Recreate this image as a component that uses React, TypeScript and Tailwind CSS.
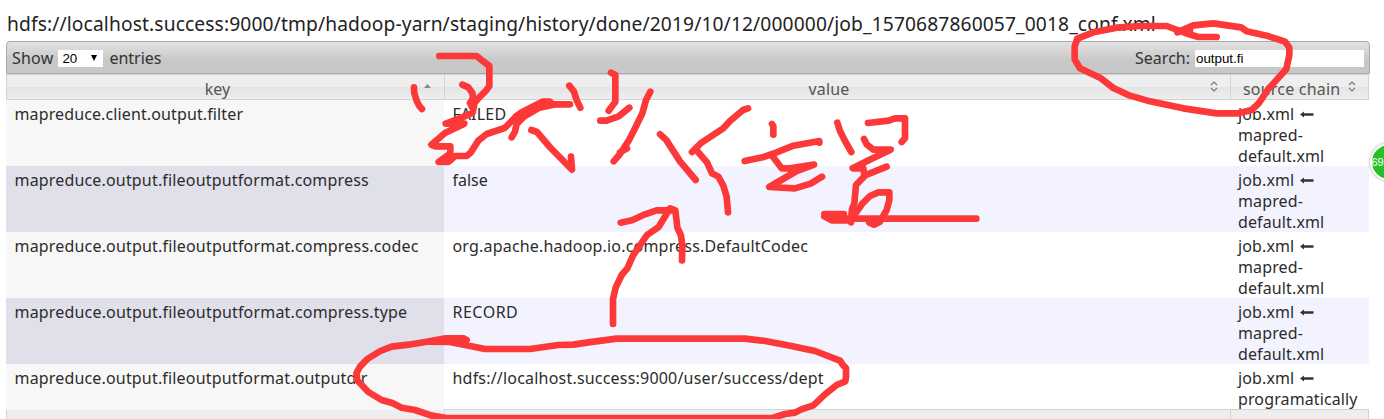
import React from "react";

type Row = { name: string; value: string; chain: string[]; nameGap: string; valueGap: string };

const rows: Row[] = [
  { name: "mapreduce.client.output.filter", value: "FAILED", chain: ["mapred-", "default.xml"], nameGap: "tracking-[0.12px]", valueGap: "tracking-[0.2px]" },
  { name: "mapreduce.output.fileoutputformat.compress", value: "false", chain: ["mapred-", "default.xml"], nameGap: "tracking-[0.17px]", valueGap: "tracking-normal" },
  { name: "mapreduce.output.fileoutputformat.compress.codec", value: "org.apache.hadoop.io.compress.DefaultCodec", chain: ["mapred-", "default.xml"], nameGap: "tracking-[0.18px]", valueGap: "tracking-[0.19px]" },
  { name: "mapreduce.output.fileoutputformat.compress.type", value: "RECORD", chain: ["mapred-", "default.xml"], nameGap: "tracking-[0.18px]", valueGap: "tracking-[0.5px]" },
  { name: "mapreduce.output.fileoutputformat.outputdir", value: "hdfs://localhost.success:9000/user/success/dept", chain: ["programatically"], nameGap: "tracking-[0.17px]", valueGap: "tracking-[0.2px]" },
];

const bodyGrid = "grid grid-cols-[438px_786px_139px]";
const headGrid = "grid grid-cols-[437px_786px_138px]";

function SortBoth() {
  return (
    <svg width="8" height="11" viewBox="0 0 8 11" fill="none" stroke="#777" strokeWidth="1.1" className="-mt-[3px] shrink-0">
      <path d="M1 4 4 1l3 3M1 7l3 3 3-3" />
    </svg>
  );
}

function Arrow() {
  return (
    <svg width="14" height="7" viewBox="0 0 14 7" className="ml-[6px] inline-block align-[2px]">
      <path d="M0 3.5 4 .6V2.2h9.500v2.600H4v1.600z" fill="#333" />
    </svg>
  );
}

function Marks() {
  return (
    <svg className="pointer-events-none absolute left-0 top-0" width="1384" height="419" viewBox="0 0 1384 419" fill="none" stroke="#fc3838" strokeWidth="20" strokeLinecap="round" strokeLinejoin="round">
      <g transform="translate(400 50) scale(.33333)">
        <path d="M42 112 43 130 50 152 58 168 66 177" />
        <path d="M118 18H230L246 31 268 48V108L258 122 235 145 215 170" />
        <path d="M187 104 205 112 217 129 219 145 210 159 222 168 218 188 180 205 137 221H193L135 249 94 284 105 289H151V310L116 336 145 336 166 318H200L212 308 235 272 260 252 314 234 345 203 363 188 405 166 427 155H449L459 163 510 163" />
        <path d="M335 262 345 245 350 222 372 200 418 173 460 164" />
        <path d="M350 200 410 172" strokeWidth="24" />
        <path d="M394 240 411 246 452 294 516 359 513 320" />
        <path d="M508 107 522 125 530 151 541 173" />
        <path d="M633 68 646 74V155L626 182" />
        <path d="M601 212H620L656 199 688 173" />
        <path d="M751 125 738 150 727 190 704 237 686 272 660 312 641 334M681 295 660 307" />
      </g>
      <g transform="translate(640 90) scale(.33333)">
        <path d="M60 133 78 149 120 214 167 270" />
        <path d="M324 55 309 60 270 93 250 115 182 160 156 186M169 180 201 217 216 250 235 260 250 287 260 320 264 367" />
        <path d="M396 102 400 108V134" />
        <path d="M314 213 368 202 410 187 460 167 538 153V158M397 198 425 235H450L522 224 470 243 388 291 465 295 512 281 546 260" />
        <path d="M592 98 600 123 615 153 634 186" />
        <path d="M684 99 746 92 765 85H795V145L785 156" />
        <path d="M672 147 680 163 700 179H752L695 206 638 235H670L673 257 740 230M675 257 648 285 643 340 636 358 633 397" />
        <path d="M640 380 667 341 690 318 715 307H748V330L740 360 720 395 702 404 688 398" />
        <path d="M553 372H612L575 386H1009M553 379 575 391H625" />
      </g>
      <g transform="translate(560 190) scale(.33333)">
        <path d="M159 402V327L167 293 185 255 202 235 220 195 262 134 296 111 330 55 346 61 352 112 363 137 367 168 366 211" />
        <path d="M182 98 216 91 255 73 290 61H340" />
      </g>
      <g transform="translate(340 320) scale(.33333)">
        <path d="M380 60 370 55H317L260 65 205 74 155 80 121 93 82 117 60 140 50 158 51 180 85 216 125 240 157 249 185 263 225 270 275 287 320 294H1298L1335 282 1365 278 1384 268 1420 256 1455 223 1490 195 1516 184 1518 171V145L1508 134 1500 122 1425 93 1350 77 1276 63 1215 56H830L745 67 700 74 655 75 570 87H435L390 78 330 66 270 65" />
        <path d="M320 60 376 65" />
      </g>
      <g transform="translate(1040 0) scale(.33333)">
        <path d="M530 111H475L436 99 380 78H300L230 83 160 97 112 116 104 140V178L120 205 180 233 220 264 270 287 330 304 430 325 530 340H595L635 330 657 309 685 267 739 207 748 165V143L735 125 680 107 620 94 603 82 520 70 460 76 412 97" />
        <path d="M412 93 450 90" />
      </g>
    </svg>
  );
}

export default function App() {
  return (
    <div className="relative h-[419px] w-[1384px] overflow-hidden bg-white pl-[6px] font-['Noto_Sans','Noto_Sans_CJK_SC',sans-serif] text-[16px] leading-[21px] text-[#2c2c2c]">
      <h1 className="h-[41px] whitespace-nowrap pl-px pt-[10px] text-[19.2px] leading-[27px] tracking-[0.132px] text-[#222]"><span>hdfs://localhost.success:9000/tmp/hadoop-yarn/staging/history/done/2019/10/12/000000/job_1570687860057_0018_conf.xml</span></h1>
      <div className="flex h-[33px] w-[1364px] items-center justify-between rounded-t-[4px] border border-[#aaa] bg-linear-to-b from-[#e2e2e2] to-[#c8c8c8] to-60% px-[5px] text-[#333]">
        <div className="flex items-center">
          <span className="pt-[2px] tracking-[0.2px]">Show</span>
          <div className="ml-[5px] mr-[6px] mt-px flex h-[17px] w-[45px] items-center justify-between bg-white pl-[4px] pr-[6px] font-['Liberation_Sans',sans-serif] text-[13.33px] text-black">
            <span>20</span>
            <svg width="6" height="6" viewBox="0 0 6 6"><path d="M0 0h6L3 6z" fill="#000" /></svg>
          </div>
          <span className="pt-[2px]">entries</span>
        </div>
        <div className="flex items-center">
          <span className="pt-[2px]">Search:</span>
          <div className="ml-[5px] mt-px flex h-[17px] w-[169px] items-center bg-white pl-px font-['Liberation_Sans',sans-serif] text-[13.33px] text-black"><span>output.fi</span></div>
        </div>
      </div>
      <div className={`${headGrid} h-[26px] w-[1363px] border border-[#d3d3d3] bg-linear-to-b from-[#eee] from-50% via-[#e4e4e4] via-50% to-[#eee] text-[#555]`}>
        <div className="flex items-center pr-[13px]">
          <span className="flex-1 pl-[4px] pt-[4px] text-center">key</span>
          <svg width="7" height="4" viewBox="0 0 7 4" className="-mt-[4px]"><path d="M0 4h7L3.5 0z" fill="#888" /></svg>
        </div>
        <div className="flex items-center border-l border-[#d3d3d3] pr-[12px]">
          <span className="flex-1 pl-[3px] pt-[4px] text-center tracking-[0.2px]">value</span>
          <SortBoth />
        </div>
        <div className="flex items-center border-l border-[#d3d3d3] pl-[12px]">
          <span className="w-[105px] whitespace-nowrap pt-[4px] tracking-[0.2px]">source chain</span>
          <SortBoth />
        </div>
      </div>
      {rows.map((r, i) => (
        <div key={r.name} className={`${bodyGrid} w-[1363px] ${i === 4 ? "h-[45px]" : "h-[66px]"} ${i % 2 ? "bg-[#f3f3ff]" : "bg-white"}`}>
          <div className={`whitespace-nowrap pl-[8.5px] pt-[4px] ${i % 2 ? "bg-[#e0e0ea]" : "bg-[#f7f7f7]"}`}><span className={r.nameGap}>{r.name}</span></div>
          <div className="whitespace-nowrap pl-[8.500px] pt-[4px]"><span className={r.valueGap}>{r.value}</span></div>
          <div className="whitespace-nowrap pl-[8px] pt-[4px] tracking-[0.12px]">
            <div className="h-[21px]">job.xml<Arrow /></div>
            {r.chain.map((c) => <div key={c}>{c}</div>)}
          </div>
        </div>
      ))}
      <div className={`${headGrid} h-[26px] w-[1363px] border border-[#d3d3d3] bg-[#eee]`}>
        <div />
        <div className="border-l border-[#d3d3d3]" />
        <div className="border-l border-[#d3d3d3]" />
      </div>
      <div className="absolute left-[1370px] top-[143px] flex h-[38px] w-[38px] items-center rounded-full border-2 border-white bg-[#27c127] font-['Liberation_Sans',sans-serif] text-[11px] text-white shadow-[0_0_3px_#999]"><span className="-ml-[0.5px]">69</span></div>
      <Marks />
    </div>
  );
}
